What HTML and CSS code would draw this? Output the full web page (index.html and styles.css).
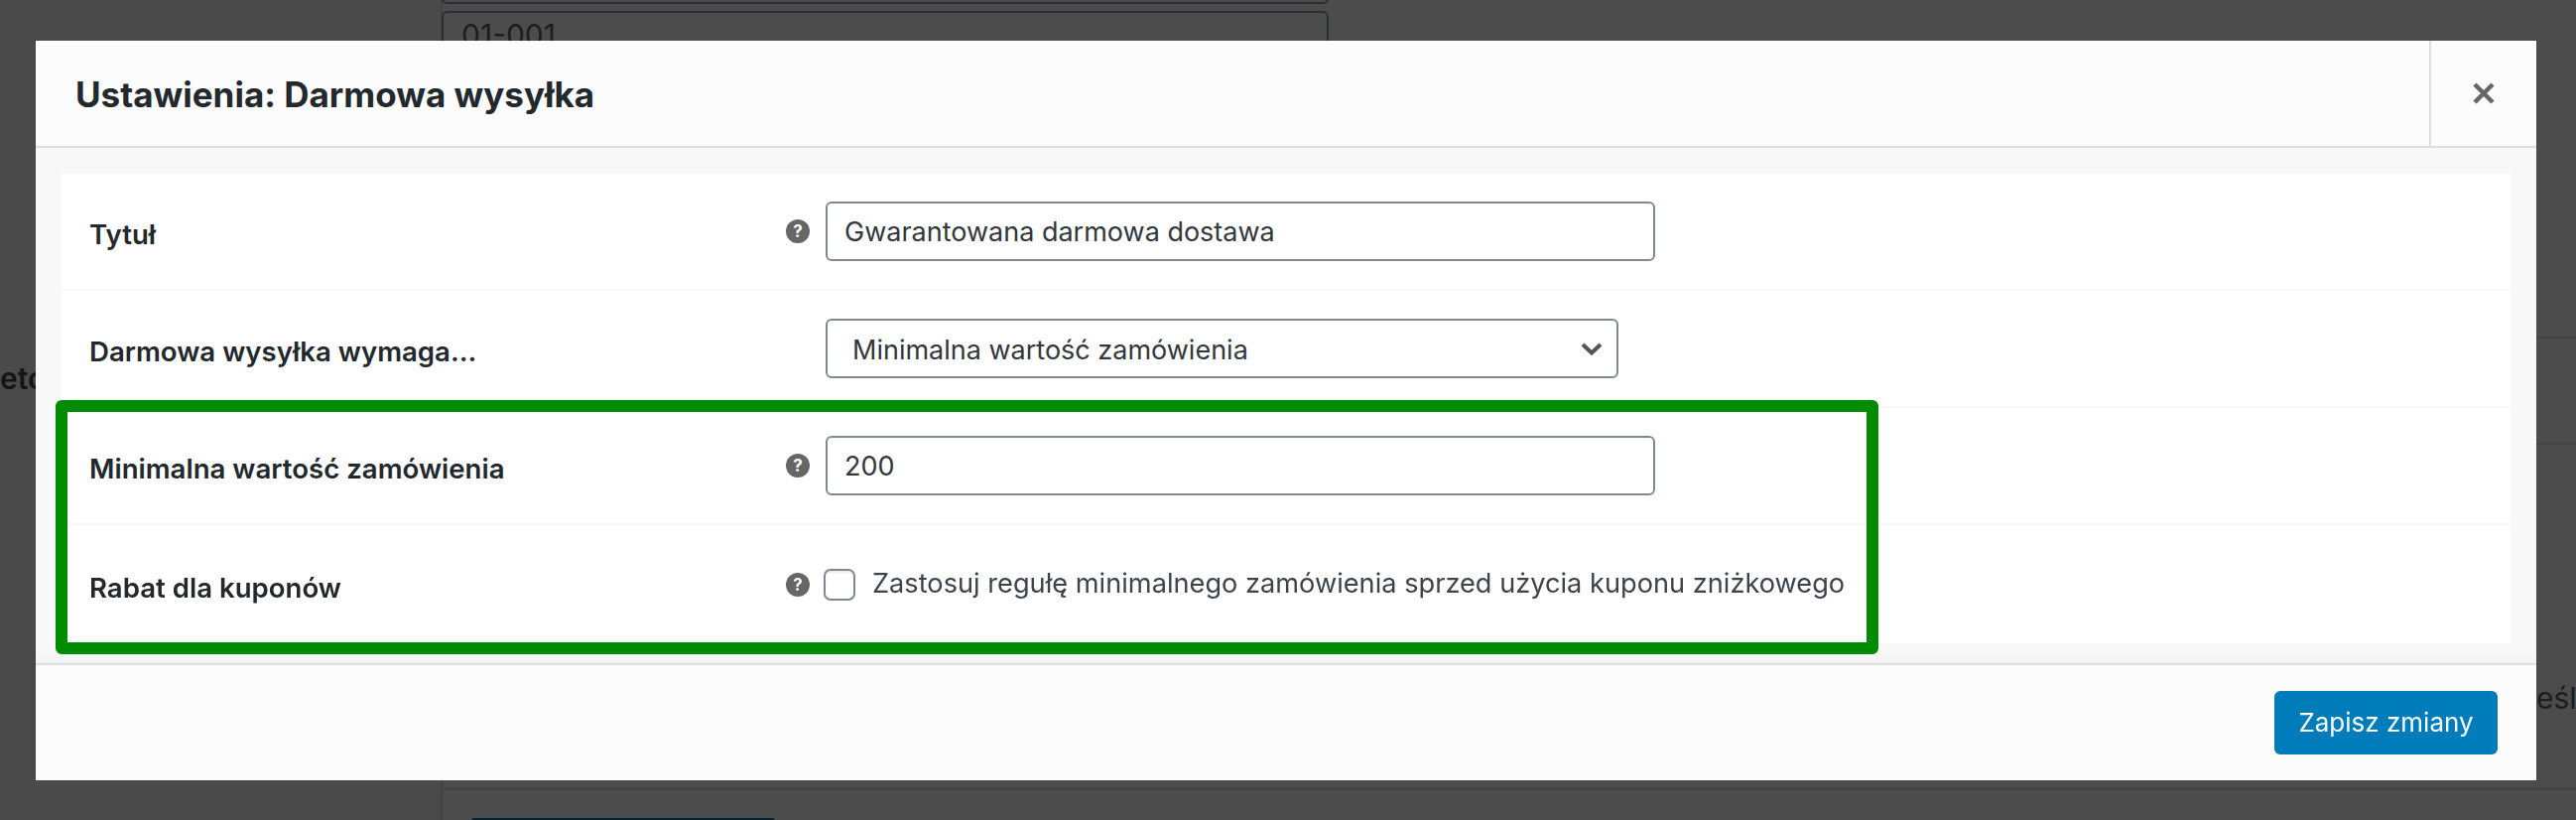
FILE: index.html
```html
<!DOCTYPE html>
<html lang="pl">
<head>
<meta charset="utf-8">
<title>Ustawienia: Darmowa wysyłka</title>
<link rel="stylesheet" href="styles.css">
</head>
<body>
<div class="page">
  <aside class="side"><span class="side-label">eto</span></aside>
  <main class="main">
    <div class="ghost-field ghost-first"></div>
    <div class="ghost-field">01-001</div>
    <div class="ghost-row ghost-row-a"></div>
    <div class="ghost-row ghost-row-b"></div>
    <div class="ghost-text">eślo</div>
    <div class="ghost-foot"><div class="ghost-btn"></div></div>
  </main>
</div>

<section class="modal">
  <header class="modal-head">
    <h1 class="modal-title">Ustawienia: Darmowa wysyłka</h1>
    <button class="modal-close" type="button" aria-label="Zamknij">
      <svg class="close-icon" viewBox="0 0 22 22"><path d="M2 2 20 20M20 2 2 20"/></svg>
    </button>
  </header>
  <div class="modal-body">
    <div class="panel">
      <div class="row">
        <label class="row-label">Tytuł</label>
        <span class="help">?</span>
        <input class="field" type="text" value="Gwarantowana darmowa dostawa">
      </div>
      <div class="row">
        <label class="row-label">Darmowa wysyłka wymaga...</label>
        <span class="help help-empty"></span>
        <div class="select-wrap">
          <select class="select"><option>Minimalna wartość zamówienia</option></select>
          <svg class="chevron" viewBox="0 0 22 13"><path d="M2 2 11 10.5 20 2"/></svg>
        </div>
      </div>
      <div class="row">
        <label class="row-label">Minimalna wartość zamówienia</label>
        <span class="help">?</span>
        <input class="field" type="text" value="200">
      </div>
      <div class="row row-last">
        <label class="row-label">Rabat dla kuponów</label>
        <span class="help">?</span>
        <label class="check-line"><input class="check" type="checkbox"><span class="check-text">Zastosuj regułę minimalnego zamówienia sprzed użycia kuponu zniżkowego</span></label>
      </div>
    </div>
  </div>
  <footer class="modal-foot">
    <button class="save" type="button">Zapisz zmiany</button>
  </footer>
  <div class="highlight"></div>
</section>
</body>
</html>
```
FILE: styles.css
```css
* { box-sizing: border-box; }
html, body { margin: 0; padding: 0; }
body {
  width: 2596px;
  height: 826px;
  overflow: hidden;
  background: #4a4a4a;
  font-family: Inter, "Liberation Sans", sans-serif;
}
.page { display: flex; width: 2596px; height: 826px; overflow: hidden; }
.side { width: 444px; flex: none; padding-top: 364px; background: #4a4a4a; }
.side-label { display: block; margin-left: 0; font-size: 30px; line-height: 34px; font-weight: 600; color: #131516; }
.main { flex: 1; min-width: 0; border-left: 2px solid #424242; background: #4c4c4c; }
.ghost-field {
  width: 894px;
  height: 60px;
  margin-left: -1px;
  padding: 5px 0 0 18px;
  border: 2px solid #2a2f33;
  border-radius: 6px;
  font-size: 30px;
  line-height: 34px;
  color: #1b1e20;
  margin-top: 7px;
}
.ghost-first { margin-top: -56px; }
.ghost-row { border-bottom: 2px solid #444; }
.ghost-row-a { height: 270px; }
.ghost-row-b { height: 107px; }
.ghost-text { margin: 238px 0 0 2110px; font-size: 30px; line-height: 34px; color: #1b1d1f; white-space: nowrap; }
.ghost-foot { margin-top: 73px; border-top: 3px solid #424242; padding: 28px 0 0 29px; }
.ghost-btn { width: 306px; height: 10px; background: #06222e; border-radius: 3px; }

.modal {
  position: fixed;
  left: 36px;
  top: 41px;
  width: 2520px;
  height: 745px;
  display: flex;
  flex-direction: column;
  background: #fff;
}
.modal-head {
  flex: none;
  height: 108px;
  display: flex;
  justify-content: space-between;
  background: #fcfcfc;
  border-bottom: 2px solid #dddddd;
}
.modal-title {
  margin: 0;
  padding-left: 40px;
  padding-top: 1px;
  align-self: center;
  font-size: 35px;
  line-height: 40px;
  font-weight: 700;
  color: #23282d;
}
.modal-close {
  width: 108px;
  padding: 0;
  display: flex;
  align-items: center;
  justify-content: center;
  background: none;
  border: 0;
  border-left: 2px solid #dddddd;
}
.close-icon { width: 22px; height: 22px; fill: none; stroke: #666; stroke-width: 4.5; }
.modal-body { flex: 1; min-height: 0; padding: 26px 26px 20px; background: #f8f8f8; }
.panel { background: #fff; height: 473px; }
.row {
  height: 118px;
  display: flex;
  align-items: center;
  padding-left: 28px;
  border-bottom: 2px solid #f8f8f8;
}
.row-last { height: 119px; border-bottom: 0; }
.row-label {
  flex: none;
  width: 702px;
  padding-top: 6px;
  font-size: 27.6px;
  line-height: 32px;
  font-weight: 600;
  color: #23282d;
}
.help {
  flex: none;
  width: 24px;
  height: 24px;
  margin-right: 16px;
  border-radius: 50%;
  background: #666;
  color: #fff;
  font-size: 17px;
  line-height: 24px;
  font-weight: 700;
  text-align: center;
}
.help-empty { background: none; }
.field {
  width: 836px;
  height: 60px;
  padding: 0 17px;
  border: 2px solid #7e8993;
  border-radius: 6px;
  background: #fff;
  font: 400 27px/1 Inter, "Liberation Sans", sans-serif;
  color: #32373c;
  outline: 0;
}
.select-wrap { position: relative; width: 799px; height: 60px; }
.select {
  width: 100%;
  height: 100%;
  padding: 2px 60px 0 25px;
  border: 2px solid #7e8993;
  border-radius: 6px;
  background: #fff;
  font: 400 27px/1 Inter, "Liberation Sans", sans-serif;
  color: #32373c;
  appearance: none;
  -webkit-appearance: none;
}
.chevron {
  position: absolute;
  right: 16px;
  top: 24px;
  width: 22px;
  height: 13px;
  fill: none;
  stroke: #555;
  stroke-width: 4;
}
.check-line {
  display: flex;
  align-items: center;
  gap: 17px;
  margin-left: -2px;
  font-size: 27.2px;
  line-height: 32px;
  color: #3c434a;
}
.check-text { padding-bottom: 2px; }
.check {
  width: 32px;
  height: 32px;
  margin: 0;
  border: 2px solid #7e8993;
  border-radius: 7px;
  background: #fff;
  box-shadow: inset 0 2px 2px rgba(0, 0, 0, .08);
  appearance: none;
  -webkit-appearance: none;
}
.modal-foot {
  flex: none;
  height: 118px;
  display: flex;
  align-items: center;
  justify-content: flex-end;
  padding: 0 39px 0 0;
  background: #fcfcfc;
  border-top: 2px solid #dddddd;
  box-shadow: 0 -4px 8px rgba(0, 0, 0, .03);
}
.save {
  width: 225px;
  height: 64px;
  padding: 0;
  border: 0;
  border-radius: 6px;
  background: #007cba;
  color: #fff;
  font: 400 26px/1 Inter, "Liberation Sans", sans-serif;
}
.highlight {
  position: absolute;
  left: 20px;
  top: 362px;
  width: 1837px;
  height: 256px;
  border: 12px solid #008c00;
  border-radius: 6px;
  pointer-events: none;
}
```
